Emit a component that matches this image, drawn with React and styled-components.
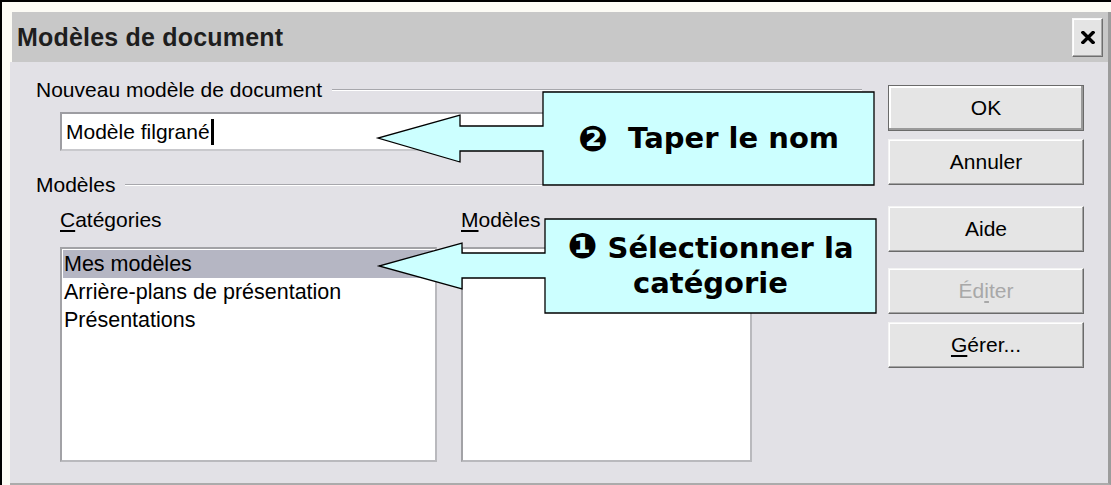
import React from "react";
import styled, { createGlobalStyle } from "styled-components";

const Global = createGlobalStyle`
  html, body { margin: 0; padding: 0; background: #ffffff; }
  * { box-sizing: border-box; }
`;

const Frame = styled.div`
  position: relative;
  width: 1111px;
  height: 485px;
  border-top: 2px solid #000;
  border-left: 2px solid #000;
  background: #fcfbf5;
  padding: 10px 0 0 8px;
  font-family: "Liberation Sans", Arial, sans-serif;
  overflow: hidden;
`;

const Dialog = styled.div`
  width: 1101px;
  height: 473px;
  display: flex;
  flex-direction: column;
  border-right: 3px solid #9c9c9c;
  border-bottom: 2px solid #ababab;
`;

const TitleBar = styled.div`
  height: 50px;
  margin-left: 2px;
  background: #c8c8c8;
  display: flex;
  align-items: center;
  justify-content: space-between;
  padding: 0 5px 0 5px;
  flex-shrink: 0;
`;

const Title = styled.div`
  font-family: "Liberation Sans", Arial, sans-serif;
  font-weight: bold;
  font-size: 25px;
  color: #1e1e1e;
  letter-spacing: 0.2px;
`;

const CloseButton = styled.div`
  width: 31px;
  height: 39px;
  background: #e4e4e4;
  border-top: 1px solid #f8f8f8;
  border-left: 1px solid #f8f8f8;
  border-right: 1px solid #6e6e6e;
  border-bottom: 1px solid #6e6e6e;
  box-shadow: inset -1px -1px 0 #a6a6a6, inset 1px 1px 0 #ffffff;
  display: flex;
  align-items: center;
  justify-content: center;
`;

const Body = styled.div`
  flex: 1;
  background: #e2e1e6;
  display: flex;
  padding: 16px 24px 0 26px;
`;

const LeftColumn = styled.div`
  width: 826px;
  display: flex;
  flex-direction: column;
`;

const ButtonColumn = styled.div`
  width: 196px;
  margin-left: 26px;
  display: flex;
  flex-direction: column;
  padding-top: 7px;
`;

const GroupHeading = styled.div`
  display: flex;
  align-items: center;
  height: 24px;
  margin-top: ${(p) => p.$mt || 0}px;
  font-size: 21px;
  line-height: 24px;
  color: #000;
`;

const Groove = styled.div`
  flex: 1;
  height: 2px;
  margin-left: 10px;
  border-top: 1px solid #a7a7ac;
  border-bottom: 1px solid #ffffff;
`;

const TextInput = styled.div`
  margin: 10px 0 0 24px;
  width: 790px;
  height: 39px;
  background: #fff;
  border-top: 2px solid #9d9da2;
  border-left: 2px solid #9d9da2;
  border-right: 2px solid #c9c9cd;
  border-bottom: 2px solid #c9c9cd;
  display: flex;
  align-items: center;
  padding-left: 4px;
  font-size: 21px;
  color: #000;
`;

const Caret = styled.span`
  display: inline-block;
  width: 3px;
  height: 26px;
  background: #000;
  margin-left: 1px;
`;

const ListGrid = styled.div`
  margin: 11px 0 0 24px;
  display: grid;
  grid-template-columns: 377px 291px;
  column-gap: 24px;
  row-gap: 15px;
`;

const SubLabel = styled.div`
  font-size: 21px;
  line-height: 24px;
  color: #000;
`;

const U = styled.span`
  text-decoration: underline;
  text-underline-offset: 3px;
`;

const ListBox = styled.div`
  height: 215px;
  background: #fff;
  border-top: 2px solid #a2a2a6;
  border-left: 2px solid #a2a2a6;
  border-right: 2px solid #b9b9bd;
  border-bottom: 2px solid #b9b9bd;
  padding: 1px 2px 0 1px;
`;

const ListItem = styled.div`
  height: 28px;
  line-height: 28px;
  padding-left: 1px;
  font-size: 21.5px;
  color: #000;
  background: ${(p) => (p.$selected ? "#b5b6c3" : "transparent")};
  white-space: nowrap;
`;

const Button = styled.div`
  height: 46px;
  margin-top: ${(p) => p.$mt || 0}px;
  background: #e5e5e5;
  display: flex;
  align-items: center;
  justify-content: center;
  font-size: 21px;
  color: ${(p) => (p.$disabled ? "#a8a8a8" : "#000")};
  border-top: 1px solid ${(p) => (p.$default ? "#6a6a6a" : "#f4f4f4")};
  border-left: 1px solid ${(p) => (p.$default ? "#6a6a6a" : "#f4f4f4")};
  border-right: 1px solid #6a6a6a;
  border-bottom: 1px solid #6a6a6a;
  box-shadow: ${(p) =>
    p.$default
      ? "inset -2px -2px 0 #9a9a9a, inset 2px 2px 0 #ffffff"
      : "inset -1px -1px 0 #a4a4a4, inset 1px 1px 0 #ffffff"};
`;

const CalloutWrap = styled.div`
  position: absolute;
  left: ${(p) => p.$x}px;
  top: ${(p) => p.$y}px;
  width: ${(p) => p.$w}px;
  height: ${(p) => p.$h}px;
`;

const CalloutSvg = styled.svg`
  position: absolute;
  left: 0;
  top: 0;
  overflow: visible;
`;

const CalloutText = styled.div`
  position: absolute;
  top: 0;
  bottom: 0;
  left: ${(p) => p.$bx}px;
  right: 0;
  display: flex;
  align-items: center;
  justify-content: center;
  text-align: center;
  font-family: "DejaVu Sans", "Liberation Sans", sans-serif;
  font-weight: bold;
  font-size: 29px;
  line-height: 35px;
  color: #000;
  white-space: pre;
`;

const Badge = styled.span`
  font-size: 1.22em;
  line-height: 0;
`;

function Callout({ x, y, w, h, bx, shaftTop, shaftBottom, headX, headTop, headBottom, tipY, children }) {
  const d = `M${bx},0 H${w} V${h} H${bx} V${shaftBottom} H${headX} V${headBottom} L0,${tipY} L${headX},${headTop} V${shaftTop} H${bx} Z`;
  return (
    <CalloutWrap $x={x - 2} $y={y - 2} $w={w} $h={h}>
      <CalloutSvg width={w} height={h} viewBox={`0 0 ${w} ${h}`}>
        <path d={d} fill="#ccffff" stroke="#000" strokeWidth="1.3" strokeLinejoin="miter" />
      </CalloutSvg>
      <CalloutText $bx={bx}>{children}</CalloutText>
    </CalloutWrap>
  );
}

export default function App() {
  return (
    <>
      <Global />
      <Frame>
        <Dialog>
          <TitleBar>
            <Title>Modèles de document</Title>
            <CloseButton>
              <svg width="14" height="13" viewBox="0 0 14 13">
                <path d="M2 1.5 L12 11.5 M12 1.5 L2 11.5" stroke="#000" strokeWidth="3.4" strokeLinecap="square" />
              </svg>
            </CloseButton>
          </TitleBar>
          <Body>
            <LeftColumn>
              <GroupHeading>
                Nouveau modèle de document
                <Groove />
              </GroupHeading>
              <TextInput>
                Modèle filgrané
                <Caret />
              </TextInput>
              <GroupHeading $mt={22}>
                Modèles
                <Groove />
              </GroupHeading>
              <ListGrid>
                <SubLabel>
                  <U>C</U>atégories
                </SubLabel>
                <SubLabel>
                  <U>M</U>odèles
                </SubLabel>
                <ListBox>
                  <ListItem $selected>Mes modèles</ListItem>
                  <ListItem>Arrière-plans de présentation</ListItem>
                  <ListItem>Présentations</ListItem>
                </ListBox>
                <ListBox />
              </ListGrid>
            </LeftColumn>
            <ButtonColumn>
              <Button $default>OK</Button>
              <Button $mt={8}>Annuler</Button>
              <Button $mt={21}>Aide</Button>
              <Button $mt={16} $disabled>
                Éd<U>i</U>ter
              </Button>
              <Button $mt={8}>
                <U>G</U>érer...
              </Button>
            </ButtonColumn>
          </Body>
        </Dialog>
        <Callout x={378} y={92} w={496} h={93} bx={165} shaftTop={34} shaftBottom={59} headX={82} headTop={23} headBottom={70} tipY={46}>
          <Badge>❷</Badge>
          {"  Taper le nom"}
        </Callout>
        <Callout x={379} y={219} w={497} h={94} bx={166} shaftTop={34} shaftBottom={59} headX={83} headTop={24} headBottom={70} tipY={47}>
          <span>
            <Badge>❶</Badge>
            {" Sélectionner la\ncatégorie"}
          </span>
        </Callout>
      </Frame>
    </>
  );
}
